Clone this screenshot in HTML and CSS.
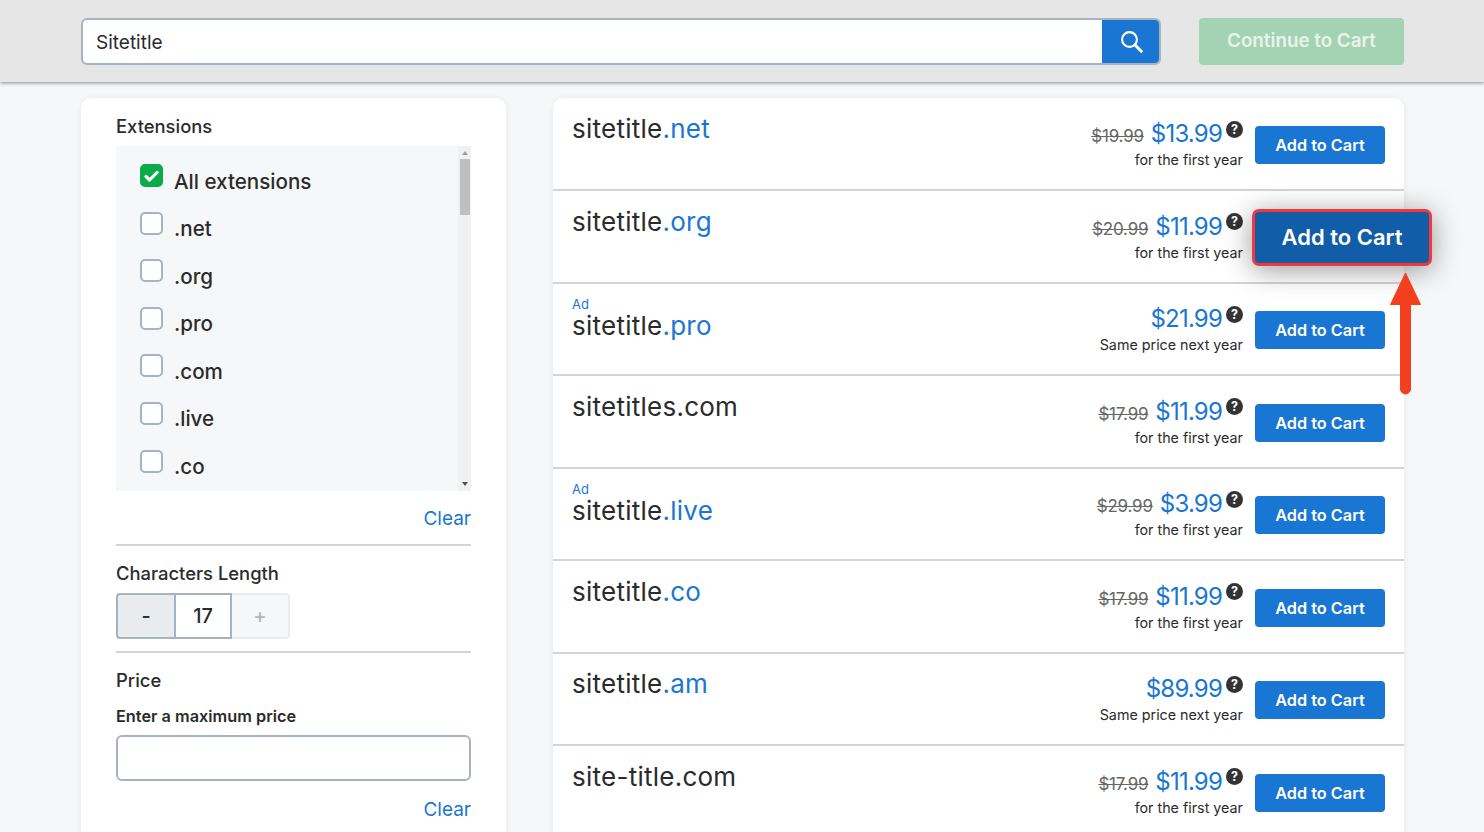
FILE: index.html
```html
<!DOCTYPE html>
<html lang="en">
<head>
<meta charset="utf-8">
<title>Domain search</title>
<link rel="stylesheet" href="styles.css">
</head>
<body>
<header class="topbar">
  <div class="search">
    <div class="search-input">Sitetitle</div>
    <div class="search-btn">
      <svg width="22" height="22" viewBox="0 0 22 22" fill="none" stroke="#fff"><circle cx="8.5" cy="8.5" r="7.4" stroke-width="2.1"/><path d="M14 14 20.3 20.3" stroke-width="3" stroke-linecap="round"/></svg>
    </div>
  </div>
  <div class="continue">Continue to Cart</div>
</header>
<main class="content">
  <aside class="filters">
    <h3 class="f-title f-ext">Extensions</h3>
    <div class="ext-box">
      <ul class="ext-list">
        <li class="ext"><span class="cb cb-on"><svg width="15" height="12" viewBox="0 0 15 12" fill="none" stroke="#fff" stroke-width="3.2" stroke-linecap="round" stroke-linejoin="round"><path d="M2 6.5 5.6 10 13 2.5"/></svg></span><span class="ext-label">All extensions</span></li>
        <li class="ext"><span class="cb"></span><span class="ext-label">.net</span></li>
        <li class="ext"><span class="cb"></span><span class="ext-label">.org</span></li>
        <li class="ext"><span class="cb"></span><span class="ext-label">.pro</span></li>
        <li class="ext"><span class="cb"></span><span class="ext-label">.com</span></li>
        <li class="ext"><span class="cb"></span><span class="ext-label">.live</span></li>
        <li class="ext"><span class="cb"></span><span class="ext-label">.co</span></li>
      </ul>
      <div class="scrollbar">
        <span class="arrow-up"></span>
        <span class="thumb"></span>
        <span class="arrow-down"></span>
      </div>
    </div>
    <div class="clear clear-a">Clear</div>
    <hr class="rule rule-a">
    <h3 class="f-title f-len">Characters Length</h3>
    <div class="stepper">
      <span class="st st-minus">-</span>
      <span class="st st-val">17</span>
      <span class="st st-plus">+</span>
    </div>
    <hr class="rule rule-b">
    <h3 class="f-title f-price">Price</h3>
    <label class="f-label">Enter a maximum price</label>
    <div class="price-input"></div>
    <div class="clear clear-b">Clear</div>
  </aside>
  <section class="results">
    <article class="row">
      <div class="name">sitetitle<span class="tld">.net</span></div>
      <div class="price"><div class="line"><s class="old">$19.99</s><span class="now">$13.99</span><span class="help">?</span></div><div class="note">for the first year</div></div>
      <button class="add">Add to Cart</button>
    </article>
    <article class="row">
      <div class="name">sitetitle<span class="tld">.org</span></div>
      <div class="price"><div class="line"><s class="old">$20.99</s><span class="now">$11.99</span><span class="help">?</span></div><div class="note">for the first year</div></div>
      <div class="add-slot"><button class="add add-big">Add to Cart</button></div>
    </article>
    <article class="row">
      <div class="name name-ad"><span class="ad">Ad</span>sitetitle<span class="tld">.pro</span></div>
      <div class="price"><div class="line"><span class="now">$21.99</span><span class="help">?</span></div><div class="note">Same price next year</div></div>
      <button class="add">Add to Cart</button>
    </article>
    <article class="row">
      <div class="name">sitetitles.com</div>
      <div class="price"><div class="line"><s class="old">$17.99</s><span class="now">$11.99</span><span class="help">?</span></div><div class="note">for the first year</div></div>
      <button class="add">Add to Cart</button>
    </article>
    <article class="row">
      <div class="name name-ad"><span class="ad">Ad</span>sitetitle<span class="tld">.live</span></div>
      <div class="price"><div class="line"><s class="old">$29.99</s><span class="now">$3.99</span><span class="help">?</span></div><div class="note">for the first year</div></div>
      <button class="add">Add to Cart</button>
    </article>
    <article class="row">
      <div class="name">sitetitle<span class="tld">.co</span></div>
      <div class="price"><div class="line"><s class="old">$17.99</s><span class="now">$11.99</span><span class="help">?</span></div><div class="note">for the first year</div></div>
      <button class="add">Add to Cart</button>
    </article>
    <article class="row">
      <div class="name">sitetitle<span class="tld">.am</span></div>
      <div class="price"><div class="line"><span class="now">$89.99</span><span class="help">?</span></div><div class="note">Same price next year</div></div>
      <button class="add">Add to Cart</button>
    </article>
    <article class="row">
      <div class="name">site-title.com</div>
      <div class="price"><div class="line"><s class="old">$17.99</s><span class="now">$11.99</span><span class="help">?</span></div><div class="note">for the first year</div></div>
      <button class="add">Add to Cart</button>
    </article>
  </section>
</main>
<svg class="pointer" width="33" height="123" viewBox="0 0 33 123" fill="#f23f1e"><path d="M16.5 1 31.5 32.5H21.5V117a5 5 0 0 1-10 0V32.5H1.5Z" stroke="#f23f1e" stroke-width="1" stroke-linejoin="round"/></svg>
</body>
</html>
```
FILE: styles.css
```css
* { box-sizing: border-box; }
html, body { margin: 0; padding: 0; }
body {
  width: 1484px;
  height: 832px;
  overflow: hidden;
  position: relative;
  background: #f5f7f8;
  color: #2b2b2b;
  font-family: "Inter", "Noto Sans", "Liberation Sans", sans-serif;
}
.topbar {
  height: 82px;
  background: #e6e6e6;
  box-shadow: 0 1px 4px rgba(0,0,0,.45);
  padding: 18px 80px 0 81px;
  display: flex;
  gap: 38px;
  align-items: flex-start;
  position: relative;
  z-index: 2;
}
.search {
  width: 1080px;
  height: 47px;
  display: flex;
  border: 2px solid #a6b4c1;
  border-radius: 6px;
  background: #fff;
  overflow: hidden;
}
.search-input {
  flex: 1;
  padding-left: 13px;
  font-size: 19px;
  line-height: 46px;
}
.search-btn {
  width: 59px;
  margin: -2px -2px -2px 0;
  background: #1976d2;
  display: flex;
  align-items: center;
  justify-content: center;
}
.continue {
  width: 205px;
  height: 47px;
  background: #a3d3b3;
  border-radius: 4px;
  color: #e9f3ec;
  font-size: 18.8px;
  font-weight: 600;
  text-align: center;
  line-height: 46px;
}
.content {
  display: flex;
  gap: 47px;
  padding: 16px 80px 0 81px;
  align-items: flex-start;
}
.filters {
  width: 425px;
  height: 760px;
  background: #fff;
  border-radius: 10px;
  padding: 0 35px;
  box-shadow: 0 1px 6px rgba(0,0,0,.08);
}
.f-title {
  margin: 0;
  font-size: 18.4px;
  font-weight: 500;
  line-height: 24px;
}
.f-ext { padding-top: 16px; margin-bottom: 8px; }
.ext-box {
  height: 345px;
  background: #f5f7f8;
  display: flex;
  justify-content: space-between;
}
.ext-list { list-style: none; margin: 0; padding: 18px 0 0 24px; }
.ext {
  height: 47.6px;
  display: flex;
  align-items: flex-start;
}
.cb {
  width: 23px;
  height: 23px;
  border: 2px solid #a6b4c1;
  border-radius: 5px;
  background: #fff;
  display: flex;
  align-items: center;
  justify-content: center;
}
.cb-on { background: #0aac4a; border-color: #0aac4a; }
.ext-label {
  margin-left: 11px;
  margin-top: 3.5px;
  font-size: 20.6px;
  font-weight: 500;
  line-height: 28px;
}
.scrollbar {
  width: 13px;
  background: #f1f1f1;
  display: flex;
  flex-direction: column;
  align-items: center;
  padding: 5px 0;
  position: relative;
}
.arrow-up { border: 3px solid transparent; border-top: 0; border-bottom: 4px solid #9c9c9c; }
.thumb { width: 10px; height: 56px; background: #bfbfbf; margin-top: 4px; }
.arrow-down { border: 3px solid transparent; border-bottom: 0; border-top: 4px solid #505050; margin-top: auto; }
.clear {
  text-align: right;
  color: #1976d2;
  font-size: 19px;
  line-height: 24px;
}
.clear-a { margin-top: 16px; }
.rule { border: 0; height: 2px; background: #d4d4d4; margin: 0; }
.rule-a { margin-top: 13px; }
.f-len { margin-top: 15px; }
.stepper { display: flex; margin-top: 8px; width: 174px; height: 46px; }
.st {
  width: 58px;
  display: flex;
  align-items: center;
  justify-content: center;
  font-size: 20px;
  font-weight: 500;
}
.st-minus { background: #e8ecef; border: 2px solid #a6b4c1; border-right: 0; border-radius: 4px 0 0 4px; }
.st-val { background: #fff; border: 2px solid #a6b4c1; }
.st-plus { background: #f5f7f8; border: 2px solid #e8ecef; border-left: 0; border-radius: 0 4px 4px 0; color: #b5b5b5; }
.rule-b { margin-top: 12px; }
.f-price { margin-top: 15px; }
.f-label { display: block; margin-top: 13px; font-size: 16.3px; font-weight: 600; line-height: 22px; }
.price-input {
  margin-top: 8px;
  height: 46px;
  background: #fff;
  border: 2px solid #a6b4c1;
  border-radius: 6px;
}
.clear-b { margin-top: 17px; }
.results {
  width: 851px;
  padding-top: .5px;
  background: #fff;
  border-radius: 10px 10px 0 0;
  box-shadow: 0 1px 6px rgba(0,0,0,.08);
}
.row {
  height: 92.5px;
  padding: 27.5px 19px 0 19px;
  border-bottom: 2px solid #d4d4d4;
  display: flex;
  align-items: flex-start;
  position: relative;
}
.row:last-child { border-bottom: 0; }
.name {
  flex: 1;
  margin-top: -14px;
  font-size: 26px;
  letter-spacing: .25px;
  line-height: 34px;
}
.name-ad { margin-top: -15px; position: relative; padding-top: 13px; }
.ad {
  position: absolute;
  left: 0;
  top: 0;
  font-size: 13px;
  letter-spacing: 0;
  line-height: 16px;
  color: #1976d2;
}
.tld { color: #1976d2; }
.price { text-align: right; margin-top: -8px; margin-right: 12px; }
.line { display: flex; align-items: baseline; justify-content: flex-end; }
.old { font-size: 17px; letter-spacing: -.2px; color: #666; margin-right: 7px; }
.now { font-size: 24px; letter-spacing: -.8px; color: #1976d2; line-height: 32px; }
.help {
  width: 17px;
  height: 17px;
  border-radius: 50%;
  background: #333;
  color: #fff;
  font-size: 12.5px;
  font-weight: 700;
  line-height: 17px;
  text-align: center;
  margin-left: 4px;
  align-self: flex-start;
  margin-top: 2.5px;
}
.note { font-size: 14.3px; line-height: 20px; margin-top: 0; }
.add {
  width: 130px;
  height: 38px;
  border: 0;
  border-radius: 4px;
  background: #1976d2;
  color: #fff;
  font: inherit;
  font-size: 16.3px;
  font-weight: 600;
  padding: 0;
}
.add-slot { width: 130px; height: 38px; position: relative; }
.add-big {
  position: absolute;
  left: -3px;
  top: -9.5px;
  width: 180px;
  height: 57px;
  padding-bottom: 2px;
  background: #125da8;
  border: 3px solid #f0383e;
  border-radius: 7px;
  font-size: 22px;
  box-shadow: 0 4px 28px rgba(0,0,0,.4);
  z-index: 3;
}
.pointer { position: absolute; left: 1389px; top: 272px; z-index: 4; }
```
